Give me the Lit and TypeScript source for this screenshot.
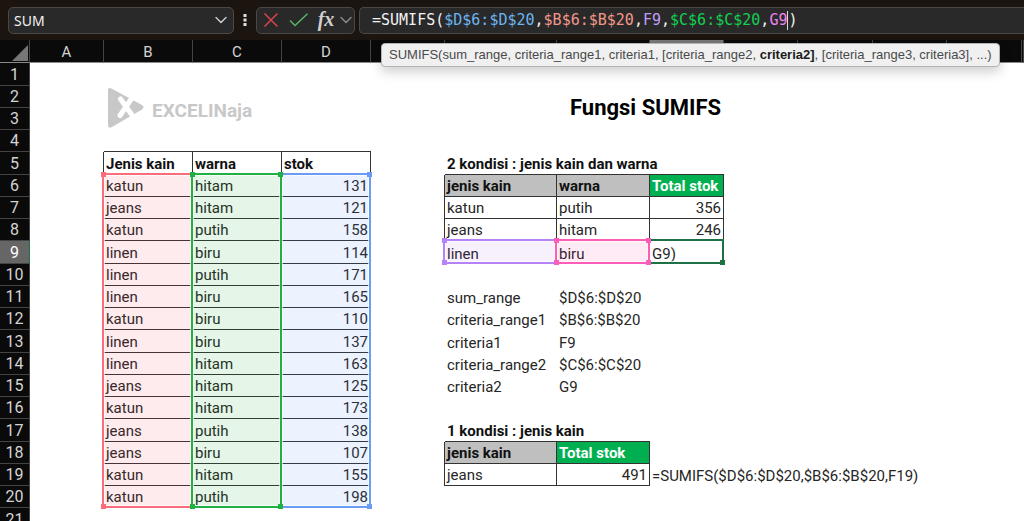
import { LitElement, html, css, svg, nothing } from "lit";
import { customElement } from "lit/decorators.js";

type Cell = { t?: string; c?: string };
type Row = Record<string, Cell>;

const COLS = ["A", "B", "C", "D", "E", "F", "G", "H", "I", "J", "K", "L", "M"];
const LETTERED = 4; // the function hint covers the letters of all later columns

const STOCK: [string, string, number][] = [
  ["katun", "hitam", 131],
  ["jeans", "hitam", 121],
  ["katun", "putih", 158],
  ["linen", "biru", 114],
  ["linen", "putih", 171],
  ["linen", "biru", 165],
  ["katun", "biru", 110],
  ["linen", "biru", 137],
  ["linen", "hitam", 163],
  ["jeans", "hitam", 125],
  ["katun", "hitam", 173],
  ["jeans", "putih", 138],
  ["jeans", "biru", 107],
  ["katun", "hitam", 155],
  ["katun", "putih", 198],
];

const sheet: Record<number, Row> = {
  4: { B: { c: "line-b" }, C: { c: "line-b" }, D: { c: "line-b" } },
  5: {
    A: { c: "line-r" },
    B: { t: "Jenis kain", c: "bold box" },
    C: { t: "warna", c: "bold box" },
    D: { t: "stok", c: "bold box" },
    F: { t: "2 kondisi : jenis kain dan warna", c: "bold line-b" },
    G: { c: "line-b" },
    H: { c: "line-b" },
  },
  6: {
    E: { c: "line-r" },
    F: { t: "jenis kain", c: "bold box grey" },
    G: { t: "warna", c: "bold box grey" },
    H: { t: "Total stok", c: "bold box green" },
  },
  7: { E: { c: "line-r" }, F: { t: "katun", c: "box" }, G: { t: "putih", c: "box" }, H: { t: "356", c: "box num" } },
  8: { E: { c: "line-r" }, F: { t: "jeans", c: "box" }, G: { t: "hitam", c: "box" }, H: { t: "246", c: "box num" } },
  9: { F: { t: "linen" }, G: { t: "biru" }, H: { t: "G9)" } },
  11: { F: { t: "sum_range" }, G: { t: "$D$6:$D$20" } },
  12: { F: { t: "criteria_range1" }, G: { t: "$B$6:$B$20" } },
  13: { F: { t: "criteria1" }, G: { t: "F9" } },
  14: { F: { t: "criteria_range2" }, G: { t: "$C$6:$C$20" } },
  15: { F: { t: "criteria2" }, G: { t: "G9" } },
  17: { F: { t: "1 kondisi : jenis kain", c: "bold line-b" }, G: { c: "line-b" } },
  18: { E: { c: "line-r" }, F: { t: "jenis kain", c: "bold box grey" }, G: { t: "Total stok", c: "bold box green" } },
  19: {
    E: { c: "line-r" },
    F: { t: "jeans", c: "box" },
    G: { t: "491", c: "box num" },
    H: { t: "=SUMIFS($D$6:$D$20,$B$6:$B$20,F19)" },
  },
};

STOCK.forEach(([kain, warna, stok], i) => {
  const n = 6 + i;
  sheet[n] = {
    ...(sheet[n] ?? {}),
    B: { t: kain, c: "line-b" },
    C: { t: warna, c: "line-b" },
    D: { t: String(stok), c: "box num" },
  };
});

const chevron = svg`<path d="M1 1.5 6 6.5 11 1.5" fill="none" stroke="currentColor" stroke-width="1.4" stroke-linecap="round" stroke-linejoin="round"/>`;

@customElement("formula-bar")
export class FormulaBar extends LitElement {
  static styles = css`
    :host {
      display: flex;
      align-items: center;
      height: 40px;
      box-sizing: border-box;
      padding-left: 8px;
      background: #1c140e;
      color: #f2f2f2;
      font-family: "Noto Sans", sans-serif;
    }
    .field {
      display: flex;
      align-items: center;
      box-sizing: border-box;
      height: 27px;
      background: #292929;
      border: 1px solid #4b4744;
      border-radius: 5px;
    }
    .name {
      width: 226px;
    }
    .name input {
      flex: 1;
      min-width: 0;
      border: 0;
      outline: 0;
      padding: 0 0 0 5px;
      background: none;
      color: inherit;
      font: 14px "Noto Sans", sans-serif;
    }
    button {
      display: flex;
      align-items: center;
      justify-content: center;
      padding: 0;
      border: 0;
      background: none;
      color: #d0d0d0;
    }
    .drop {
      width: 24px;
      height: 24px;
    }
    .dots {
      width: 22px;
      height: 24px;
    }
    .tools {
      width: 99px;
      margin-right: 4px;
    }
    .tool {
      width: 28px;
      height: 24px;
    }
    .fx {
      width: 26px;
      height: 24px;
      padding-bottom: 2px;
      font: italic bold 20px/22px "Liberation Serif", serif;
    }
    .more {
      width: 14px;
      height: 24px;
      color: #8c8c8c;
    }
    .formula {
      flex: 1;
      min-width: 0;
      border-right: 0;
      border-radius: 5px 0 0 5px;
      padding-left: 12px;
      white-space: pre;
      overflow: hidden;
      font: 15px "DejaVu Sans Mono", monospace;
      outline: 0;
    }
    .blue { color: #6cb4f0; }
    .red { color: #f2968a; }
    .purple { color: #c09cf5; }
    .green { color: #12cf52; }
    .pink { color: #ee82ee; }
    .caret {
      width: 1px;
      height: 19px;
      background: #dcdcdc;
    }
  `;

  render() {
    return html`
      <div class="field name">
        <input aria-label="Name box" value="SUM" />
        <button class="drop" aria-label="Open names"><svg width="12" height="8">${chevron}</svg></button>
      </div>
      <button class="dots" aria-label="Resize name box">
        <svg width="4" height="14" fill="#e0e0e0"><path d="M.5 1h3v3h-3zM.5 5.500h3v3h-3zM.5 10h3v3h-3z" /></svg>
      </button>
      <div class="field tools">
        <button class="tool" aria-label="Cancel">
          <svg width="14" height="14" fill="none" stroke="#d9444c" stroke-width="1.500"><path d="M.5.5l13 13M13.500.5l-13 13" /></svg>
        </button>
        <button class="tool" aria-label="Enter">
          <svg width="20" height="14" fill="none" stroke="#57b567" stroke-width="1.500"><path d="M1 7.500l5 5L18.500.8" /></svg>
        </button>
        <button class="fx" aria-label="Insert function">fx</button>
        <button class="more" aria-label="More functions"><svg width="12" height="8">${chevron}</svg></button>
      </div>
      <div class="field formula" role="textbox" aria-label="Formula" contenteditable="true" spellcheck="false"><span>=SUMIFS(</span><span class="blue">$D$6:$D$20</span><span>,</span><span class="red">$B$6:$B$20</span><span>,</span><span class="purple">F9</span><span>,</span><span class="green">$C$6:$C$20</span><span>,</span><span class="pink">G9</span><span class="caret"></span><span>)</span></div>
    `;
  }
}

@customElement("sheet-grid")
export class SheetGrid extends LitElement {
  static styles = css`
    :host {
      display: grid;
      grid-template-columns: 30px 74px 89px 89px 89px 74px 112px 93px 74px 74px 75px 74px 75px auto;
      grid-template-rows: 23px repeat(5, 23px 22px 22px 22px) 23px;
      color: #262626;
      font-family: Roboto, sans-serif;
      font-size: 15px;
    }
    table {
      grid-area: 1 / 1 / -1 / -1;
      width: 100%;
      table-layout: fixed;
      border-collapse: separate;
      border-spacing: 0;
      background: #fff;
    }
    .w30 { width: 30px; }
    .w74 { width: 74px; }
    .w75 { width: 75px; }
    .w89 { width: 89px; }
    .w93 { width: 93px; }
    .w112 { width: 112px; }
    tr { height: 22px; }
    thead tr,
    tbody tr:nth-child(4n + 1) { height: 23px; }
    th,
    td {
      box-sizing: border-box;
      height: inherit;
      padding: 0 2px;
      line-height: 20px;
      white-space: nowrap;
      text-align: left;
      vertical-align: bottom;
    }
    th {
      background: #0a0a0a;
      color: #d4d4d4;
      font-weight: 400;
      text-align: center;
      border-right: 1px solid #444;
      border-bottom: 1px solid #444;
    }
    thead th {
      border-bottom-color: #8a8a8a;
    }
    tbody th {
      font-size: 16px;
    }
    tbody .current {
      background: #666;
      color: #fff;
      border-right-color: #1e7145;
    }
    thead .current {
      background: #777;
    }
    .corner svg {
      display: block;
      margin-left: 9px;
    }
    .bold { font-weight: 700; color: #111; }
    .num { text-align: right; }
    .box {
      border-right: 1px solid #333;
      border-bottom: 1px solid #333;
    }
    .line-r { border-right: 1px solid #333; }
    .line-b { border-bottom: 1px solid #333; }
    .grey { background: #bfbfbf; }
    .green { background: #00b050; color: #fff; }
    .title {
      grid-area: 3 / 8 / 5 / 11;
      position: relative;
      align-self: center;
      margin: 0;
      padding: 0 0 2px 13px;
      font-size: 22px;
      font-weight: 700;
      color: #000;
      white-space: nowrap;
    }
    .range {
      --tint: transparent;
      position: relative;
      margin: -2px 0 0 -2px;
      border: 2px solid var(--line);
      background: var(--tint);
      box-shadow: inset 0 0 0 1px #ffffffb0;
      pointer-events: none;
    }
    .range i {
      position: absolute;
      width: 5px;
      height: 5px;
      background: var(--line);
    }
    .range .nw { top: -3px; left: -3px; }
    .range .ne { top: -3px; right: -3px; }
    .range .sw { bottom: -3px; left: -3px; }
    .range .se { bottom: -3px; right: -3px; }
    .r-blue { grid-area: 7 / 5 / 22 / 6; --line: #6a9cf5; --tint: #4a8cf51a; }
    .r-red { grid-area: 7 / 3 / 22 / 4; --line: #fb6d7b; --tint: #f03c501a; }
    .r-green { grid-area: 7 / 4 / 22 / 5; --line: #1fb141; --tint: #14a8281c; }
    .r-purple { grid-area: 10 / 7 / 11 / 8; --line: #b583f7; --tint: #9640e614; }
    .r-active { grid-area: 10 / 9 / 11 / 10; --line: #1e7145; }
    .r-pink { grid-area: 10 / 8 / 11 / 9; --line: #fb5db8; --tint: #f028a018; }
    .logo {
      grid-area: 3 / 3 / 5 / 5;
      position: relative;
      display: flex;
      align-items: center;
      gap: 7px;
      padding-left: 4px;
      color: #c8c8c8;
    }
    .logo span {
      padding-top: 4px;
      font-size: 19px;
      font-weight: 700;
    }
  `;

  render() {
    const widths = ["w30", "w74", "w89", "w89", "w89", "w74", "w112", "w93", "w74", "w74", "w75", "w74", "w75"];
    const rows = Array.from({ length: 21 }, (_, i) => i + 1);
    const handles = (...at: string[]) => at.map((c) => html`<i class=${c}></i>`);
    return html`
      <table>
        <colgroup>${widths.map((w) => html`<col class=${w} />`)}<col /></colgroup>
        <thead>
          <tr>
            <th class="corner"><svg width="18" height="18"><path d="M17 1v16H1z" fill="#777" /></svg></th>
            ${COLS.map((c, i) => html`<th scope="col" aria-label=${c} class=${c === "H" ? "current" : nothing}>${i < LETTERED ? c : nothing}</th>`)}
          </tr>
        </thead>
        <tbody>
          ${rows.map(
            (n) => html`<tr>
              <th scope="row" class=${n === 9 ? "current" : nothing}>${n}</th>
              ${COLS.map((c) => {
                const cell = sheet[n]?.[c] ?? {};
                return html`<td class=${cell.c ?? nothing}>${cell.t ?? nothing}</td>`;
              })}
            </tr>`
          )}
        </tbody>
      </table>
      <div class="logo">
        <svg width="37" height="42" viewBox="0 0 37 42">
          <path d="M0 3Q0 0 3.500 1.500L34 18Q37 20 34 22.500L4 40Q0 42 0 38Z" fill="#c8c8c8" />
          <path d="M12.500 12 24 28M25 9.500 12 28.500" fill="none" stroke="#fff" stroke-width="5" stroke-linecap="round" />
        </svg>
        <span>EXCELINaja</span>
      </div>
      <h1 class="title">Fungsi SUMIFS</h1>
      <div class="range r-red">${handles("nw", "sw")}</div>
      <div class="range r-blue">${handles("ne", "se")}</div>
      <div class="range r-green">${handles("nw", "ne", "sw", "se")}</div>
      <div class="range r-purple">${handles("nw", "sw")}</div>
      <div class="range r-active">${handles("se")}</div>
      <div class="range r-pink">${handles("nw", "ne", "sw", "se")}</div>
    `;
  }
}

@customElement("app-root")
export class AppRoot extends LitElement {
  static styles = css`
    :host {
      display: block;
      position: relative;
      height: 100vh;
      overflow: hidden;
      background: #fff;
    }
    .hint {
      position: absolute;
      top: 43px;
      left: 381px;
      box-sizing: border-box;
      height: 24px;
      padding: 0 7px;
      border: 1px solid #b4b4b4;
      border-radius: 4px;
      background: #f0f0f0;
      box-shadow: 0 5px 12px #00000030;
      color: #4a4a4a;
      font: 13px/21px "Liberation Sans", sans-serif;
      white-space: nowrap;
    }
    b { color: #1c1c1c; }
  `;

  render() {
    return html`
      <formula-bar></formula-bar>
      <sheet-grid></sheet-grid>
      <div class="hint" role="tooltip">SUMIFS(sum_range, criteria_range1, criteria1, [criteria_range2, <b>criteria2]</b>, [criteria_range3, criteria3], ...)</div>
    `;
  }
}
